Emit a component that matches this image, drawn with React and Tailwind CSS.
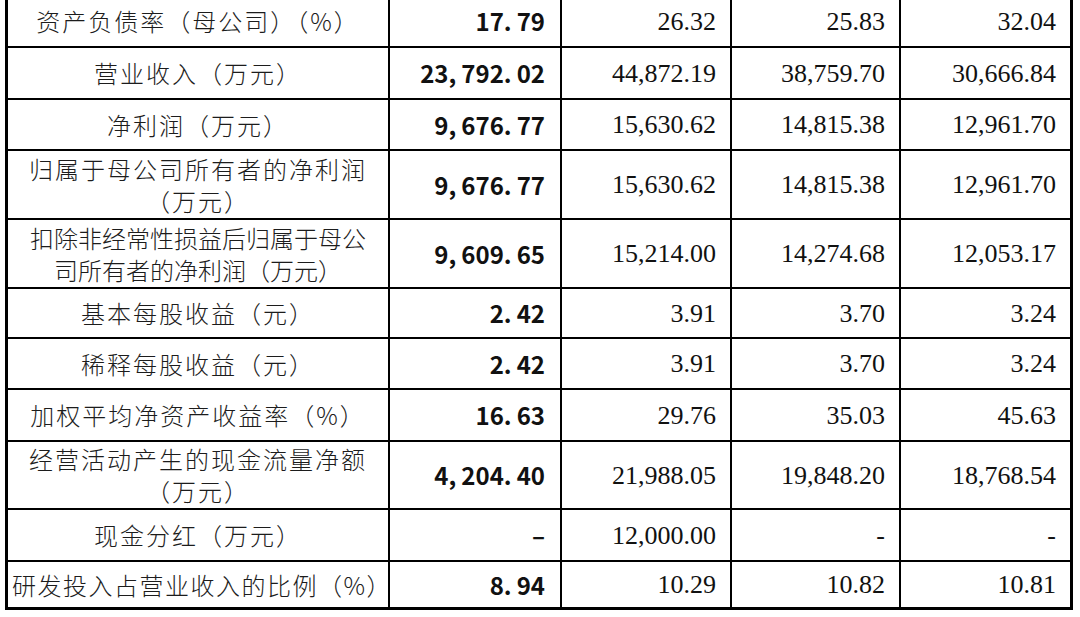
import React from "react";

const rows = [
  { label: ["资产负债率（母公司）（%）"], values: ["17.79", "26.32", "25.83", "32.04"], h: "h-[50px]" },
  { label: ["营业收入（万元）"], values: ["23,792.02", "44,872.19", "38,759.70", "30,666.84"], h: "h-[50px]" },
  { label: ["净利润（万元）"], values: ["9,676.77", "15,630.62", "14,815.38", "12,961.70"], h: "h-[49px]" },
  {
    label: ["归属于母公司所有者的净利润", "（万元）"],
    values: ["9,676.77", "15,630.62", "14,815.38", "12,961.70"],
    h: "h-[67px]",
  },
  {
    label: ["扣除非经常性损益后归属于母公", "司所有者的净利润（万元）"],
    values: ["9,609.65", "15,214.00", "14,274.68", "12,053.17"],
    h: "h-[67px]",
    track: "tracking-[0px]",
  },
  { label: ["基本每股收益（元）"], values: ["2.42", "3.91", "3.70", "3.24"], h: "h-[48px]" },
  { label: ["稀释每股收益（元）"], values: ["2.42", "3.91", "3.70", "3.24"], h: "h-[49px]" },
  { label: ["加权平均净资产收益率（%）"], values: ["16.63", "29.76", "35.03", "45.63"], h: "h-[50px]" },
  {
    label: ["经营活动产生的现金流量净额", "（万元）"],
    values: ["4,204.40", "21,988.05", "19,848.20", "18,768.54"],
    h: "h-[66px]",
  },
  { label: ["现金分红（万元）"], values: ["–", "12,000.00", "-", "-"], h: "h-[50px]" },
  {
    label: ["研发投入占营业收入的比例（%）"],
    values: ["8.94", "10.29", "10.82", "10.81"],
    h: "h-[45px]",
    track: "tracking-[1.5px] pl-[8px]",
  },
];

const cjk = "font-['Noto_Sans_CJK_SC',sans-serif]";
const serif = "font-['Liberation_Serif','Noto_Sans_CJK_SC',serif]";

// bold column: the punctuation is set wide in the source document
function BoldNum({ value }) {
  return value.split("").map((ch, i) =>
    ch === "," || ch === "." ? (
      <span key={i} className="mr-[5px]">
        {ch}
      </span>
    ) : (
      <span key={i}>{ch}</span>
    )
  );
}

function App() {
  return (
    <div className="w-[1080px] h-[617px] overflow-hidden bg-white">
      <div className="ml-[5px] mt-[-7px] w-[1068px] bg-black p-[3px] grid grid-cols-[380px_170px_168px_167px_169px] gap-[2px]">
        {rows.map((row, ri) => (
          <React.Fragment key={ri}>
            <div
              className={`${row.h} bg-white flex flex-col items-center justify-center text-center whitespace-nowrap text-[24px] leading-[32px] text-[#1c1c1c] font-light ${cjk} ${
                row.track || "tracking-[2px]"
              }`}
            >
              {row.label.map((line, li) => (
                <div key={li}>{line}</div>
              ))}
            </div>
            <div
              className={`${row.h} bg-white flex items-center justify-end pr-[15px] text-[24px] font-bold text-[#111] ${cjk}`}
            >
              <span>
                <BoldNum value={row.values[0]} />
              </span>
            </div>
            {row.values.slice(1).map((v, vi) => (
              <div
                key={vi}
                className={`${row.h} bg-white flex items-center justify-end pr-[14px] text-[26px] text-[#111] ${serif}`}
              >
                {v}
              </div>
            ))}
          </React.Fragment>
        ))}
      </div>
    </div>
  );
}

export default App;
